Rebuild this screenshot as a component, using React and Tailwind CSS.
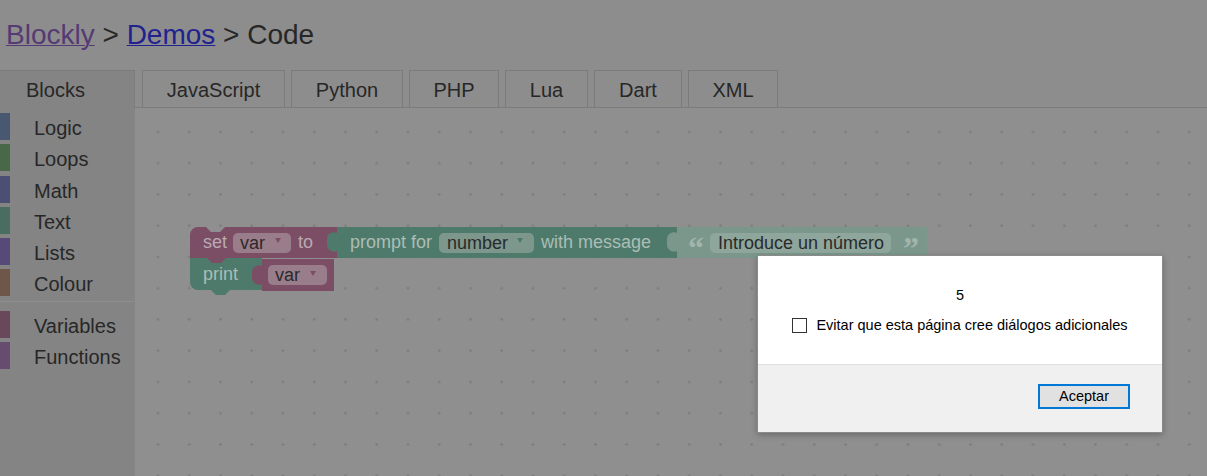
import React from "react";

const categories = [
  { name: "Logic", color: "bg-[#485870]" },
  { name: "Loops", color: "bg-[#486848]" },
  { name: "Math", color: "bg-[#4b4f74]" },
  { name: "Text", color: "bg-[#496e61]" },
  { name: "Lists", color: "bg-[#574a76]" },
  { name: "Colour", color: "bg-[#6e5649]" },
];

const extraCategories = [
  { name: "Variables", color: "bg-[#6a485b]" },
  { name: "Functions", color: "bg-[#674c70]" },
];

const tabs = [
  { name: "JavaScript", w: "w-[143px]" },
  { name: "Python", w: "w-[112px]" },
  { name: "PHP", w: "w-[90px]" },
  { name: "Lua", w: "w-[83px]" },
  { name: "Dart", w: "w-[88px]" },
  { name: "XML", w: "w-[90px]" },
];

const PINK = "#7c4e66";
const PINK_FIELD = "#9a7d8b";
const GREEN = "#4d7a6a";
const GREEN_FIELD = "#7d978d";
const SHADOW = "#7b978c";
const SHADOW_FIELD = "#8ea69c";
const LABEL = "#b8aab1";
const LABEL_GREEN = "#acbdb6";
const FONT = "'Liberation Sans', Arial, sans-serif";

function Workspace() {
  return (
    <svg
      className="block"
      width="1072"
      height="368"
      viewBox="135 108 1072 368"
      style={{ fontFamily: FONT }}
    >
      <defs>
        <pattern
          id="grid"
          patternUnits="userSpaceOnUse"
          x="156.5"
          y="130.5"
          width="31.25"
          height="31.25"
        >
          <circle cx="1.5" cy="1.5" r="1.3" fill="#7b7b7b" />
        </pattern>
      </defs>
      <rect x="135" y="108" width="1072" height="368" fill="url(#grid)" />

      {/* print block */}
      <path
        d="M190,258 H262 V290 H230 l-5,5 h-9 l-5,-5 H198 a8,8 0 0 1 -8,-8 Z"
        fill={GREEN}
      />
      {/* var block in print */}
      <path
        d="M262,259 H334 V291 H262 V284 C258,286 252,283 252,278 V272 C252,267 258,264 262,266 Z"
        fill={PINK}
      />
      {/* set block */}
      <path
        d="M190,235 a8,8 0 0 1 8,-8 h8 l5,5 h9 l5,-5 H337 V258 H226 l-5,5 h-9 l-5,-5 H190 Z"
        fill={PINK}
      />
      {/* prompt block */}
      <path
        d="M337,227 H677 V258 H337 V251 C333,253 327,250 327,245 V239 C327,234 333,231 337,233 Z"
        fill={GREEN}
      />
      {/* text shadow block */}
      <path
        d="M677,227 H927 V258 H677 V251 C673,253 667,250 667,245 V239 C667,234 673,231 677,233 Z"
        fill={SHADOW}
      />

      <g fontSize="18">
        <text x="203" y="248" fill={LABEL}>set</text>
        <rect x="233" y="233" width="58" height="20" rx="5" fill={PINK_FIELD} />
        <text x="240" y="249" fill="#2a2a2a">var</text>
        <polygon points="275,238 281,238 278,243" fill={PINK} />
        <text x="298" y="248" fill={LABEL}>to</text>

        <text x="350" y="248" fill={LABEL_GREEN}>prompt for</text>
        <rect x="439" y="233" width="95" height="20" rx="5" fill={GREEN_FIELD} />
        <text x="447" y="249" fill="#2a2a2a">number</text>
        <polygon points="517,238 523,238 520,243" fill={GREEN} />
        <text x="541" y="248" fill={LABEL_GREEN}>with message</text>

        <text
          x="688"
          y="259"
          fontSize="32"
          fontWeight="bold"
          fill="#a2b5ad"
          style={{ fontFamily: "'Liberation Serif', serif" }}
        >
          {"\u201C"}
        </text>
        <rect x="710" y="233" width="181" height="20" rx="5" fill={SHADOW_FIELD} />
        <text x="718" y="249" fill="#2a2a2a">Introduce un número</text>
        <text
          x="903"
          y="259"
          fontSize="32"
          fontWeight="bold"
          fill="#a2b5ad"
          style={{ fontFamily: "'Liberation Serif', serif" }}
        >
          {"\u201D"}
        </text>

        <text x="203" y="280" fill={LABEL_GREEN}>print</text>
        <rect x="268" y="265" width="59" height="20" rx="5" fill={PINK_FIELD} />
        <text x="275" y="281" fill="#2a2a2a">var</text>
        <polygon points="310,271 316,271 313,276" fill={PINK} />
      </g>
    </svg>
  );
}

function Dialog() {
  return (
    <div className="absolute left-[757px] top-[255px] w-[406px] h-[178px] border border-[#8a8a8a] bg-white flex flex-col font-['Liberation_Sans',Arial,sans-serif] text-[14.5px] leading-[17px] text-black shadow-[0_2px_6px_rgba(0,0,0,0.25)]">
      <div className="h-[108px] flex flex-col items-center pt-[31px]">
        <div>5</div>
        <label className="mt-[13px] flex items-center">
          <span className="w-[15px] h-[15px] border border-[#333] bg-white" />
          <span className="ml-[9px]">
            Evitar que esta página cree diálogos adicionales
          </span>
        </label>
      </div>
      <div className="flex-1 bg-[#f0f0f0] border-t border-[#dfdfdf] flex justify-end items-start pt-[19px] pr-[32px]">
        <button className="w-[92px] h-[25px] bg-[#e1e1e1] border-2 border-[#0078d7] text-[14.5px] leading-[17px]">
          Aceptar
        </button>
      </div>
    </div>
  );
}

export default function App() {
  return (
    <div className="relative w-[1207px] h-[476px] overflow-hidden bg-[#8d8d8d] font-['Liberation_Sans',Arial,sans-serif] text-[#272727]">
      {/* Title */}
      <h1 className="pt-[19px] pl-[6px] text-[28px] leading-[32px] font-normal">
        <span className="underline text-[#553a74] decoration-1">Blockly</span>{" "}
        &gt; <span className="underline text-[#22228f] decoration-1">Demos</span>{" "}
        &gt; Code
      </h1>

      {/* Tabs */}
      <div className="mt-[19px] flex h-[38px] text-[20px] leading-[23px]">
        <div className="w-[135px] h-full bg-[#848484] border-t border-r border-[#7b7b7b] pl-[26px] pt-[2px] flex items-center">
          Blocks
        </div>
        <div className="flex flex-1 gap-[6px] pl-[7px] border-b border-[#7b7b7b]">
          {tabs.map((t) => (
            <div
              key={t.name}
              className={`${t.w} h-full pt-[2px] border-t border-l border-r border-[#7b7b7b] flex items-center justify-center`}
            >
              {t.name}
            </div>
          ))}
        </div>
      </div>

      {/* Main */}
      <div className="flex h-[368px]">
        <div className="w-[135px] bg-[#848484] pt-[5px] text-[20px]">
          {categories.map((c) => (
            <div key={c.name} className="flex h-[27px] mb-[4.3px]">
              <div className={`w-[10px] h-full ${c.color}`} />
              <div className="ml-[24px] pt-[4px] leading-[23px]">{c.name}</div>
            </div>
          ))}
          <div className="h-px bg-[#8e8e8e] mt-[2px] mb-[9px]" />
          {extraCategories.map((c) => (
            <div key={c.name} className="flex h-[27px] mb-[4.3px]">
              <div className={`w-[10px] h-full ${c.color}`} />
              <div className="ml-[24px] pt-[4px] leading-[23px]">{c.name}</div>
            </div>
          ))}
        </div>
        <div className="flex-1 bg-[#8f8f8f] border-l border-[#858585]">
          <Workspace />
        </div>
      </div>

      <Dialog />
    </div>
  );
}
